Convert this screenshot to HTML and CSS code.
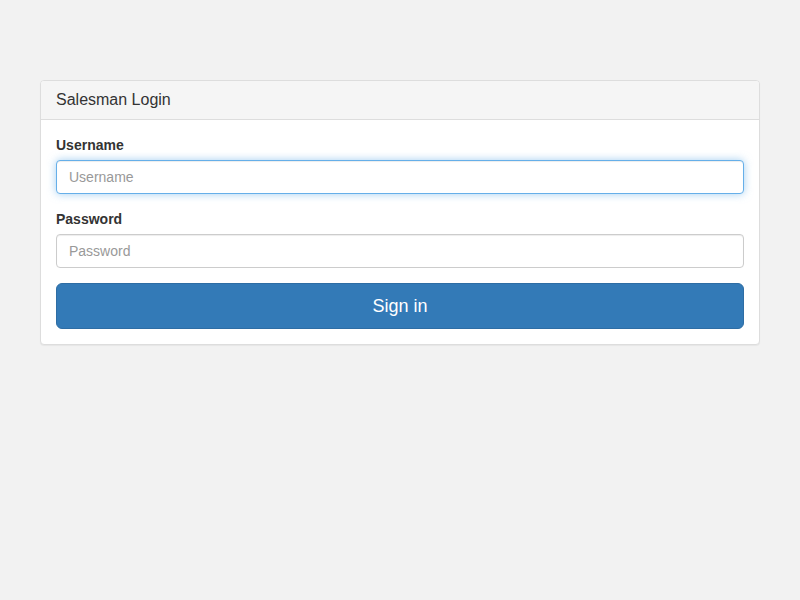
FILE: index.html
```html
<!DOCTYPE html>
<html lang="en">
<head>
<meta charset="utf-8">
<title>Salesman Login</title>
<link rel="stylesheet" href="styles.css">
</head>
<body>
<div class="container">
  <div class="panel">
    <div class="panel-heading">
      <h3 class="panel-title">Salesman Login</h3>
    </div>
    <div class="panel-body">
      <form class="login-form" onsubmit="return false;">
        <div class="form-group">
          <label for="username">Username</label>
          <input id="username" class="form-control is-focus" type="text" placeholder="Username" autofocus>
        </div>
        <div class="form-group">
          <label for="password">Password</label>
          <input id="password" class="form-control" type="password" placeholder="Password">
        </div>
        <button type="submit" class="btn btn-primary">Sign in</button>
      </form>
    </div>
  </div>
</div>
</body>
</html>
```
FILE: styles.css
```css
* { box-sizing: border-box; }
html, body { margin: 0; padding: 0; }
body {
  background: #f2f2f2;
  font-family: "Liberation Sans", Arial, Helvetica, sans-serif;
  font-size: 14px;
  line-height: 1.42857143;
  color: #333;
}
.container {
  padding: 80px 40px;
}
.panel {
  background: #fff;
  border: 1px solid #ddd;
  border-radius: 4px;
  box-shadow: 0 1px 1px rgba(0,0,0,.05);
}
.panel-heading {
  background: #f5f5f5;
  border-bottom: 1px solid #ddd;
  border-radius: 3px 3px 0 0;
  padding: 10px 15px;
}
.panel-title {
  margin: 0;
  font-size: 16px;
  font-weight: normal;
  line-height: 1.1;
  color: #333;
}
.panel-body {
  padding: 15px;
}
.form-group {
  margin-bottom: 15px;
}
label {
  display: block;
  font-weight: bold;
  margin-bottom: 5px;
}
.form-control {
  display: block;
  width: 100%;
  height: 34px;
  padding: 6px 12px;
  font-family: inherit;
  font-size: 14px;
  line-height: 1.42857143;
  color: #555;
  background: #fff;
  border: 1px solid #ccc;
  border-radius: 4px;
  box-shadow: inset 0 1px 1px rgba(0,0,0,.075);
  outline: 0;
}
.form-control::placeholder { color: #999; }
.form-control.is-focus,
.form-control:focus {
  border-color: #66afe9;
  box-shadow: inset 0 1px 1px rgba(0,0,0,.075), 0 0 8px rgba(102,175,233,.6);
}
.btn {
  display: block;
  width: 100%;
  padding: 10px 16px;
  font-family: inherit;
  font-size: 18px;
  line-height: 1.3333333;
  border-radius: 6px;
  border: 1px solid transparent;
  cursor: pointer;
}
.btn-primary {
  color: #fff;
  background: #337ab7;
  border-color: #2e6da4;
}
```
